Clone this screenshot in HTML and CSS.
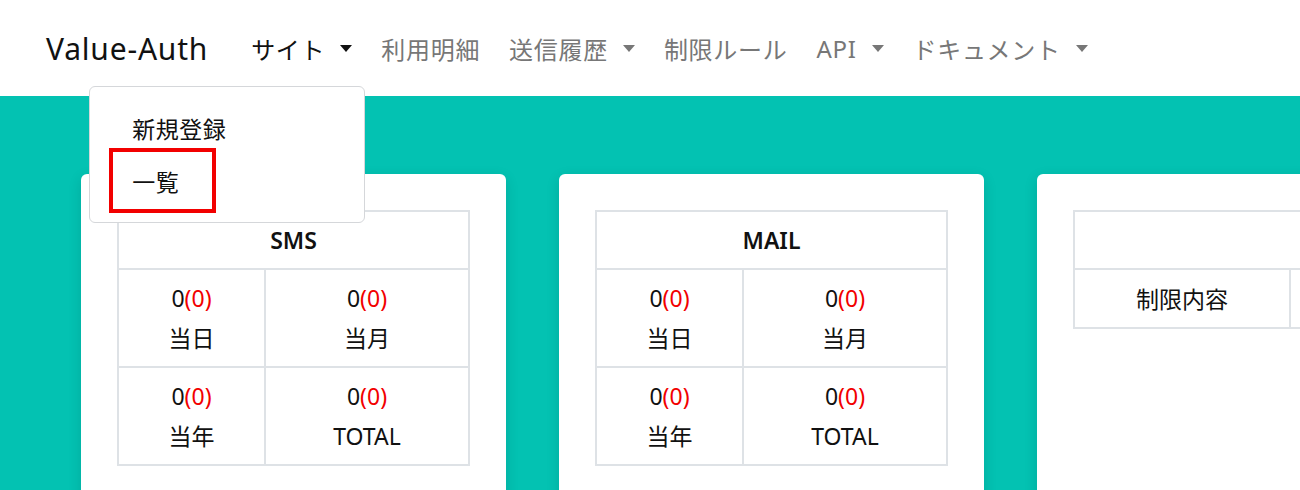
FILE: index.html
```html
<!DOCTYPE html>
<html lang="ja">
<head>
    <meta charset="UTF-8">
    <title>Value-Auth</title>
    <link rel="stylesheet" href="styles.css">
</head>
<body>

<nav class="navbar">
    <div class="brand">Value-Auth</div>
    <ul class="nav-menu">
        <li class="nav-item active has-caret">サイト
            <div class="dropdown">
                <div class="dropdown-item">新規登録</div>
                <div class="dropdown-item selected">一覧</div>
            </div>
        </li>
        <li class="nav-item">利用明細</li>
        <li class="nav-item has-caret">送信履歴</li>
        <li class="nav-item">制限ルール</li>
        <li class="nav-item has-caret">API</li>
        <li class="nav-item has-caret">ドキュメント</li>
    </ul>
</nav>

<main class="content">
    <!-- SMS -->
    <div class="card">
        <table class="stats">
            <tr><th colspan="2">SMS</th></tr>
            <tr>
                <td class="narrow">0<span class="err">(0)</span><br>当日</td>
                <td>0<span class="err">(0)</span><br>当月</td>
            </tr>
            <tr>
                <td class="narrow">0<span class="err">(0)</span><br>当年</td>
                <td>0<span class="err">(0)</span><br>TOTAL</td>
            </tr>
        </table>
    </div>

    <!-- MAIL -->
    <div class="card">
        <table class="stats">
            <tr><th colspan="2">MAIL</th></tr>
            <tr>
                <td class="narrow">0<span class="err">(0)</span><br>当日</td>
                <td>0<span class="err">(0)</span><br>当月</td>
            </tr>
            <tr>
                <td class="narrow">0<span class="err">(0)</span><br>当年</td>
                <td>0<span class="err">(0)</span><br>TOTAL</td>
            </tr>
        </table>
    </div>

    <!-- 制限 -->
    <div class="card">
        <table class="stats limits">
            <tr><th colspan="2">&nbsp;</th></tr>
            <tr class="limit-row">
                <td class="limit-name">制限内容</td>
                <td></td>
            </tr>
        </table>
    </div>
</main>

</body>
</html>
```

FILE: styles.css
```css
body {
    margin: 0;
    padding: 0;
    font-family: "Noto Sans", "Noto Sans CJK JP", sans-serif;
    color: #111;
    width: 1300px;
    height: 490px;
    overflow: hidden;
    background-color: #03c2b2;
}
.navbar {
    background-color: #fff;
    height: 96px;
    display: flex;
    align-items: center;
    padding-left: 46px;
    position: relative;
    z-index: 2;
}
.brand {
    font-size: 30px;
    color: #111;
    margin-right: 43px;
    letter-spacing: 0.8px;
}
.nav-menu {
    list-style: none;
    margin: 0;
    padding: 0;
    display: flex;
    gap: 29px;
}
.nav-item {
    font-size: 24px;
    color: #777;
    display: flex;
    align-items: center;
    position: relative;
    letter-spacing: 0.7px;
}
.nav-item.active {
    color: #111;
}
.has-caret::after {
    content: "";
    margin-left: 15px;
    border-left: 6px solid transparent;
    border-right: 6px solid transparent;
    border-top: 7px solid currentColor;
}
.nav-item.has-caret:not(.active)::after {
    border-top-color: #777;
}
.dropdown {
    position: absolute;
    left: -162px;
    top: 55px;
    width: 276px;
    height: 137px;
    background-color: #fff;
    border: 1px solid #d5d7da;
    border-radius: 6px;
    padding-top: 22px;
    box-sizing: border-box;
    letter-spacing: 0.5px;
}
.dropdown-item {
    font-size: 23px;
    color: #111;
    padding: 8px 0 8px 42px;
    line-height: 24px;
}
.dropdown-item.selected {
    margin-left: 19px;
    margin-top: -1px;
    padding: 18px 0 0 19px;
    width: 107px;
    height: 65px;
    box-sizing: border-box;
    border: 4px solid #f20000;
}
.content {
    display: flex;
    gap: 53px;
    padding: 78px 0 0 81px;
    overflow: hidden;
}
.card {
    flex: 0 0 425px;
    height: 340px;
    background-color: #fff;
    border-radius: 6px;
    padding: 36px;
    box-sizing: border-box;
    box-shadow: 0 4px 14px rgba(0, 0, 0, 0.12);
}
.stats {
    border-collapse: collapse;
    width: 353px;
    font-size: 23px;
    text-align: center;
}
.stats th,
.stats td {
    border: 2px solid #dee2e6;
}
.stats th {
    font-weight: 600;
    height: 56px;
    padding: 0;
}
.stats td {
    height: 96px;
    line-height: 40px;
    padding: 0;
}
.stats td.narrow {
    width: 145px;
}
.err {
    color: #f20000;
}
.limits {
    width: 420px;
}
.limit-row td {
    height: 57px;
}
.stats td.limit-name {
    width: 214px;
}
```
